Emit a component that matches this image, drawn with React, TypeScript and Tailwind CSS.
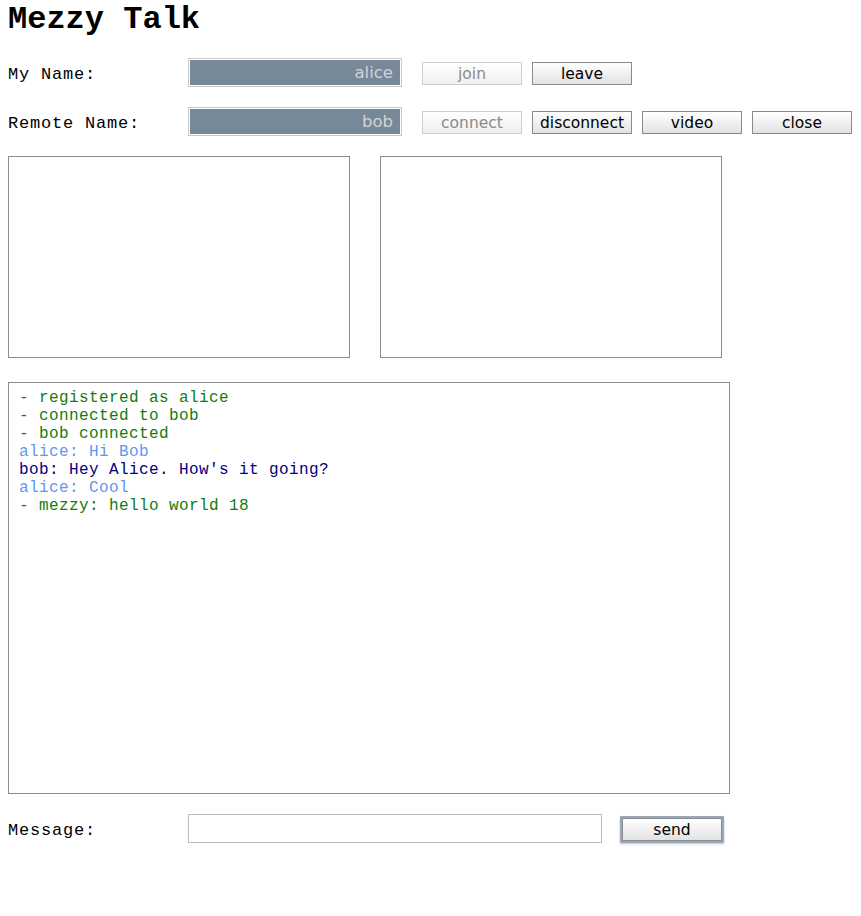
const mono = "font-['Liberation_Mono','Courier_New',monospace]";
const sans = "font-['DejaVu_Sans','Lucida_Grande',sans-serif]";

type BtnProps = { label: string; disabled?: boolean; focused?: boolean };

const Btn = ({ label, disabled, focused }: BtnProps) => {
  if (disabled) {
    return (
      <button
        disabled
        className={`${sans} w-[100px] h-[23px] flex items-center justify-center pt-[2px] border border-[#cfcfcf] bg-gradient-to-b from-white to-[#efefef] text-[15.5px] leading-none text-[#8a8a8a]`}
      >
        {label}
      </button>
    );
  }
  return (
    <button
      className={`${sans} w-[100px] h-[23px] flex items-center justify-center pt-[2px] border border-[#8a8a8a] bg-gradient-to-b from-white via-[#f1f1f1] to-[#e2e2e2] text-[15.5px] leading-none text-black ${
        focused ? "shadow-[0_0_0_2px_#9aa7b8,0_1px_2px_2px_rgba(80,90,110,0.35)] border-[#5c5c5c]" : ""
      }`}
    >
      {label}
    </button>
  );
};

const NameField = ({ value }: { value: string }) => (
  <div className="w-[214px] h-[29px] border border-[#c8c8c8] p-px bg-white">
    <div
      className={`${sans} w-full h-full bg-[#778899] text-[#d3d3d3] text-[16.5px] flex items-center justify-end pr-[7px] pt-[1px] leading-none`}
    >
      {value}
    </div>
  </div>
);

const Label = ({ text }: { text: string }) => (
  <div className={`${mono} w-[180px] pt-[4px] text-[17px] tracking-[0.8px] text-black`}>{text}</div>
);

const lines: { text: string; color: string }[] = [
  { text: "- registered as alice", color: "text-[#107c10]" },
  { text: "- connected to bob", color: "text-[#107c10]" },
  { text: "- bob connected", color: "text-[#107c10]" },
  { text: "alice: Hi Bob", color: "text-[#6495ed]" },
  { text: "bob: Hey Alice. How's it going?", color: "text-[#000080]" },
  { text: "alice: Cool", color: "text-[#6495ed]" },
  { text: "- mezzy: hello world 18", color: "text-[#107c10]" },
];

export default function App() {
  return (
    <div className="min-h-[916px] bg-white pl-[8px] pt-[2px]">
      <h1 className={`${mono} font-bold text-[32px] leading-[36px] text-black`}>Mezzy Talk</h1>

      <div className="mt-[20px] flex items-center h-[29px]">
        <Label text="My Name:" />
        <NameField value="alice" />
        <div className="ml-[20px] flex gap-[10px] pt-[2px]">
          <Btn label="join" disabled />
          <Btn label="leave" />
        </div>
      </div>

      <div className="mt-[20px] flex items-center h-[29px]">
        <Label text="Remote Name:" />
        <NameField value="bob" />
        <div className="ml-[20px] flex gap-[10px] pt-[2px]">
          <Btn label="connect" disabled />
          <Btn label="disconnect" />
          <Btn label="video" />
          <Btn label="close" />
        </div>
      </div>

      <div className="mt-[20px] flex gap-[30px]">
        <div className="w-[342px] h-[202px] border border-[#8c8c8c]" />
        <div className="w-[342px] h-[202px] border border-[#8c8c8c]" />
      </div>

      <div className="mt-[24px] w-[722px] h-[412px] border border-[#8c8c8c] pl-[10px] pt-[6px]">
        {lines.map((l, i) => (
          <div key={i} className={`${mono} ${l.color} text-[16px] tracking-[0.4px] leading-[18px] whitespace-pre`}>
            {l.text}
          </div>
        ))}
      </div>

      <div className="mt-[20px] flex items-center h-[29px]">
        <Label text="Message:" />
        <div className="w-[414px] h-[29px] border border-[#bdbdbd] bg-white" />
        <div className="ml-[20px] pt-[2px]">
          <Btn label="send" focused />
        </div>
      </div>
    </div>
  );
}
